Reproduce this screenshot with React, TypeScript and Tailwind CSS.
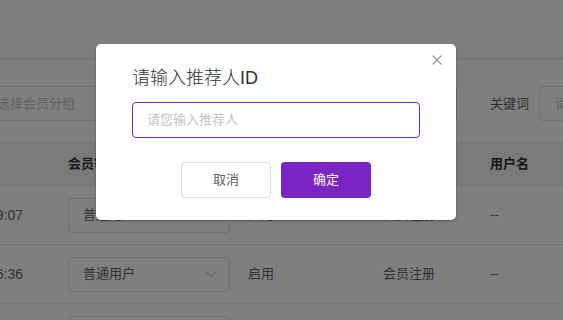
import React from "react";

const font = "font-['Liberation_Sans','Noto_Sans_CJK_SC',sans-serif]";

function Chevron() {
  return (
    <svg width="12" height="12" viewBox="0 0 12 12" fill="none">
      <path d="M1.5 4l4.5 4.5L10.5 4" stroke="#c0c4cc" strokeWidth="1.1" />
    </svg>
  );
}

function Row({ time }: { time: string }) {
  return (
    <div className="grid h-[59px] grid-cols-[68px_180px_135px_107px_1fr] items-center border-b border-[#ebeef5] text-[13px] text-[#606266]">
      <div className="flex justify-end overflow-hidden whitespace-nowrap pr-[45px] text-[14px]">{time}</div>
      <div>
        <div className="flex h-[35px] w-[162px] items-center justify-between rounded-[4px] border border-[#dcdfe6] pl-[14px] pr-[12px]">
          <span>普通用户</span>
          <Chevron />
        </div>
      </div>
      <div>启用</div>
      <div>会员注册</div>
      <div>--</div>
    </div>
  );
}

export default function App() {
  return (
    <div className={`relative h-[320px] w-[563px] overflow-hidden bg-white ${font}`}>
      {/* page */}
      <div className="h-[60px] border-b-2 border-[#ececec]" />
      <div className="flex items-center pt-[26px] pb-[21px] text-[13px]">
        <div className="ml-[-32px] flex h-[35px] w-[489px] shrink-0 items-center rounded-[4px] border border-[#dcdfe6] pl-[15px] text-[#c0c4cc]">
          请选择会员分组
        </div>
        <div className="ml-[33px] shrink-0 text-[#606266]">关键词</div>
        <div className="ml-[10px] flex h-[35px] w-[200px] shrink-0 items-center rounded-[4px] border border-[#dcdfe6] pl-[15px] text-[#c0c4cc]">
          请输入关键词
        </div>
      </div>
      <div className="grid h-[44px] grid-cols-[68px_180px_135px_107px_1fr] items-center bg-[#f5f5f5] text-[13px] font-bold text-[#303133]">
        <div />
        <div>会员等级</div>
        <div>状态</div>
        <div>来源</div>
        <div>用户名</div>
      </div>
      <Row time="2023-06-01 10:29:07" />
      <Row time="2023-05-28 14:16:36" />
      <Row time="2023-05-20 09:12:45" />

      {/* overlay */}
      <div className="absolute inset-0 bg-black/50" />

      {/* dialog */}
      <div className="absolute left-[96px] top-[44px] w-[360px] rounded-[5px] bg-white px-[36px] pt-[20px] pb-[22px] shadow-[0_1px_3px_rgba(0,0,0,0.3)]">
        <button className="absolute right-[14px] top-[11px] flex h-[10px] w-[10px] items-center justify-center">
          <svg width="10" height="10" viewBox="0 0 10 10">
            <path d="M0.5 0.5L9.5 9.5M9.5 0.5L0.5 9.5" stroke="#909399" strokeWidth="1.1" />
          </svg>
        </button>
        <div className="h-[28px] text-[18px] font-light leading-[28px] text-[#303133]">请输入推荐人ID</div>
        <div className="mt-[10px] flex h-[36px] w-[288px] items-center rounded-[4px] border border-[#7b24c4] pl-[14px] text-[13px] text-[#c0c4cc]">
          请您输入推荐人
        </div>
        <div className="mt-[24px] flex justify-center gap-[10px]">
          <button className="h-[36px] w-[90px] rounded-[4px] border border-[#dcdfe6] bg-white text-[13px] text-[#606266]">
            取消
          </button>
          <button className="h-[36px] w-[90px] rounded-[4px] bg-[#7b24c4] text-[13px] text-white">
            确定
          </button>
        </div>
      </div>
    </div>
  );
}
